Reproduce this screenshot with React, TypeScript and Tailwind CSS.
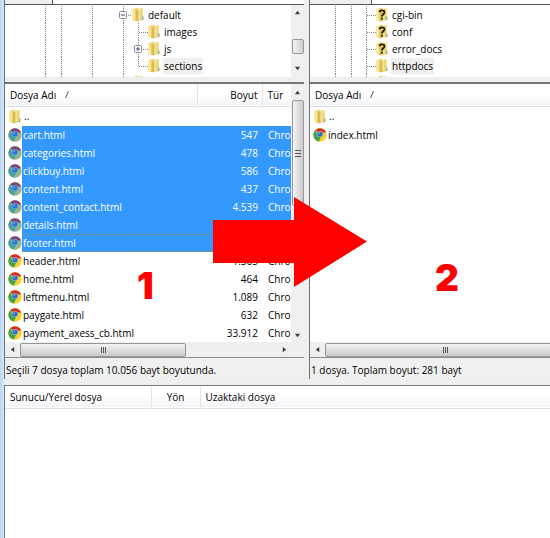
import type { ReactNode } from 'react';

type FileEntry = { name: string; size: string; selected?: boolean; focused?: boolean };

const localFiles: FileEntry[] = [
    { name: 'cart.html', size: '547', selected: true },
    { name: 'categories.html', size: '478', selected: true },
    { name: 'clickbuy.html', size: '586', selected: true },
    { name: 'content.html', size: '437', selected: true },
    { name: 'content_contact.html', size: '4.539', selected: true },
    { name: 'details.html', size: '1.906', selected: true },
    { name: 'footer.html', size: '1.563', selected: true, focused: true },
    { name: 'header.html', size: '1.565' },
    { name: 'home.html', size: '464' },
    { name: 'leftmenu.html', size: '1.089' },
    { name: 'paygate.html', size: '632' },
    { name: 'payment_axess_cb.html', size: '33.912' },
];

function FolderIcon({ unknown = false }: { unknown?: boolean }) {
    return (
        <svg viewBox="0 0 12 15" className="w-3 h-[15px] shrink-0" aria-hidden="true">
            <path d="M0.5 2.5 L5 0.5 L6.5 1 V3 L11 1.5 V13 L5 14.5 L0.5 13Z" fill="#eed67a" />
            <path d="M0.5 2.5 L3.5 3.5 V14 L0.5 13Z" fill="#f8e795" />
            <path d="M3.5 4 L6 2.5 V14 L3.5 14Z" fill="#dcbc50" />
            <path d="M7 1.5 L10 1 L11 2 V13 L7 13.8Z" fill="#f5e391" />
            <path d="M9 2 V13" stroke="#e0c25c" strokeWidth="0.8" />
            <path d="M10 9.5 h1.5 v3.5 h-1.5z" fill="#8fb3a0" />
            {unknown && (
                <path
                    d="M3.5 5.3 C3.5 2.6 8.5 2.6 8.5 5.3 C8.5 7.2 6 7.3 6 9.5 M6 10.8 V12.6"
                    fill="none"
                    stroke="#1c1803"
                    strokeWidth="1.8"
                />
            )}
        </svg>
    );
}

function ChromeIcon({ tinted = false }: { tinted?: boolean }) {
    const [red, yellow, green, blue, ring] = tinted
        ? ['#84406f', '#98b58c', '#4aa39c', '#2a72d8', '#7fb0e8']
        : ['#dc2a20', '#f8d32c', '#3fa548', '#2f6cc4', '#a9c8ec'];
    return (
        <svg viewBox="0 0 14 14" className="w-[14px] h-[14px] shrink-0" aria-hidden="true">
            <circle cx="7" cy="7" r="6.7" fill={yellow} />
            <path d="M7 7 L2.6 2 A6.7 6.7 0 0 1 13.2 4.5 L7 4.5Z" fill={red} />
            <path d="M2.6 2 A6.7 6.7 0 0 0 6 13.6 L8 8.5 L4.5 8Z" fill={green} />
            <circle cx="7" cy="6" r="3.1" fill={ring} />
            <circle cx="7" cy="6" r="2.6" fill={blue} />
            <circle cx="6.4" cy="5.2" r="0.8" fill="#8ebcf0" />
        </svg>
    );
}

type RailKind = 'pass' | 'tee' | 'end' | 'plus' | 'minus';

// one level of the dotted tree guides
function Rail({ kind, className }: { kind: RailKind; className: string }) {
    const boxed = kind === 'plus' || kind === 'minus';
    return (
        <svg className={`h-[17px] shrink-0 ${className}`} aria-hidden="true">
            <path
                d={kind === 'end' ? 'M4.5 0 V9' : 'M4.5 0 V17'}
                stroke="#85858c"
                strokeDasharray="1 1"
            />
            {kind !== 'pass' && (
                <path d="M5 9.5 H14" stroke="#85858c" strokeDasharray="1 1" />
            )}
            {boxed && (
                <>
                    <rect x="0.5" y="5.5" width="7" height="7" rx="1" fill="#fbfbfb" stroke="#8e8e8e" />
                    <path d={kind === 'plus' ? 'M2 9 H6 M4 7 V11' : 'M2 9 H6'} stroke="#3a4fa0" />
                </>
            )}
        </svg>
    );
}

function TreeRow({ rails, label, unknown, active }: { rails: ReactNode; label: string; unknown?: boolean; active?: boolean }) {
    return (
        <li className="flex h-[17px] items-center whitespace-nowrap">
            {rails}
            <FolderIcon unknown={unknown} />
            <span className={`ml-[3px] px-px leading-4 ${active ? 'bg-[#efefef]' : ''}`}>{label}</span>
        </li>
    );
}

function LocalRails({ own, child }: { own: RailKind; child?: RailKind }) {
    return (
        <>
            <Rail kind="pass" className="w-4" />
            <Rail kind="pass" className="w-[31px]" />
            <Rail kind="pass" className="w-[31px]" />
            <Rail kind={own} className={child ? 'w-[15px]' : 'w-[13px]'} />
            {child && <Rail kind={child} className="w-[14px]" />}
        </>
    );
}

function RemoteRails() {
    return (
        <>
            <Rail kind="pass" className="w-4" />
            <Rail kind="pass" className="w-[15px]" />
            <Rail kind="tee" className="w-[14px]" />
        </>
    );
}

function Arrow({ dir }: { dir: 'up' | 'down' | 'left' | 'right' }) {
    const paths = {
        up: 'M1 6 L4 2 L7 6Z',
        down: 'M1 2 L4 6 L7 2Z',
        left: 'M6 1 L2 4 L6 7Z',
        right: 'M2 1 L6 4 L2 7Z',
    };
    return (
        <button type="button" aria-label={`Scroll ${dir}`} className="flex size-[14px] shrink-0 items-center justify-center">
            <svg viewBox="0 0 8 8" className="size-[7px]">
                <path d={paths[dir]} fill="#3c3c3c" />
            </svg>
        </button>
    );
}

function HScroll({ thumb }: { thumb: string }) {
    return (
        <div className="flex h-[15px] items-center bg-[#efefef]">
            <Arrow dir="left" />
            <div className="flex min-w-0 flex-1 px-px">
                <div className={`flex h-[14px] items-center justify-center gap-px rounded-xs border border-[#979797] bg-linear-to-b from-[#f4f4f4] to-[#c9c9cb] ${thumb}`}>
                    <i className="h-[6px] w-px bg-[#555]" />
                    <i className="h-[6px] w-px bg-[#555]" />
                    <i className="h-[6px] w-px bg-[#555]" />
                </div>
            </div>
            <Arrow dir="right" />
        </div>
    );
}

function PathStrip({ width }: { width: string }) {
    return (
        <div className="flex h-[5px] border-b border-[#55555a] bg-white">
            <div className={`border-r border-[#55555a] bg-[#efefef] ${width}`} />
        </div>
    );
}

function NameHeader() {
    return (
        <th className="p-0 pl-[5px] text-left font-normal">
            <button type="button" className="flex items-center gap-[9px]">
                Dosya Adı
                <svg viewBox="0 0 4 7" className="h-[7px] w-1" aria-hidden="true">
                    <path d="M0.5 7 L3.5 0" stroke="#444" strokeWidth="0.9" />
                </svg>
            </button>
        </th>
    );
}

function ParentName() {
    return (
        <span className="flex items-center gap-[3px] pl-1">
            <FolderIcon />
            ..
        </span>
    );
}

const headRow = 'h-[22px] border-b border-[#dfdfe3] bg-linear-to-b from-white from-50% to-[#f3f4f7]';

function FileRow({ file }: { file: FileEntry }) {
    const cell = `h-[18px] whitespace-nowrap ${file.selected ? 'bg-[#3399ff] text-white' : ''} ${file.focused ? 'border-y border-dashed border-[#8c8b74] leading-4' : 'leading-[18px]'}`;
    return (
        <tr>
            <td className="p-0">
                <div className="flex items-center pl-[3px]">
                    <ChromeIcon tinted={file.selected} />
                    <span className={`min-w-0 flex-1 pl-px ${cell}`}>{file.name}</span>
                </div>
            </td>
            <td className="p-0">
                <div className={`pr-1 text-right ${cell}`}>{file.size}</div>
            </td>
            <td className="p-0">
                <div className={`pl-[6px] ${cell}`}>Chro</div>
            </td>
        </tr>
    );
}

function LocalPane() {
    return (
        <section className="flex min-w-0 flex-col border-l border-[#6f6f73]">
            <PathStrip width="w-12" />
            <div className="flex h-[72px] overflow-hidden bg-white">
                <ul className="min-w-0 flex-1 overflow-hidden pl-9 pt-px">
                    <TreeRow rails={<LocalRails own="minus" />} label="default" />
                    <TreeRow rails={<LocalRails own="pass" child="tee" />} label="images" />
                    <TreeRow rails={<LocalRails own="pass" child="plus" />} label="js" />
                    <TreeRow rails={<LocalRails own="pass" child="end" />} label="sections" active />
                    <TreeRow rails={<LocalRails own="pass" />} label="" />
                </ul>
                <div className="flex w-[13px] flex-col items-center bg-[#f0f0f0]">
                    <Arrow dir="up" />
                    <div className="mt-5 h-[15px] w-3 rounded-xs border border-[#979797] bg-linear-to-r from-[#f6f6f6] to-[#cfcfd2]" />
                    <div className="mt-[7px]">
                        <Arrow dir="down" />
                    </div>
                </div>
            </div>
            <div className="h-[5px] bg-[#efefef]" />
            <div className="flex border-t-2 border-[#77777b] bg-white">
                <div className="min-w-0 flex-1">
                    <table className="w-full table-fixed border-collapse">
                        <colgroup>
                            <col />
                            <col className="w-[65px]" />
                            <col className="w-[29px]" />
                        </colgroup>
                        <thead>
                            <tr className={headRow}>
                                <NameHeader />
                                <th className="border-l border-[#e3e4e8] p-0 pr-1 text-right font-normal">Boyut</th>
                                <th className="border-l border-[#e3e4e8] p-0 pl-[5px] text-left font-normal">Tür</th>
                            </tr>
                        </thead>
                        <tbody>
                            <tr className="h-5">
                                <td className="p-0" colSpan={3}>
                                    <ParentName />
                                </td>
                            </tr>
                            {localFiles.map((file) => (
                                <FileRow key={file.name} file={file} />
                            ))}
                        </tbody>
                    </table>
                </div>
                <div className="flex w-[13px] flex-col items-center bg-[#f0f0f0] pt-px">
                    <Arrow dir="up" />
                    <div className="mt-px flex h-[106px] w-3 flex-col items-center justify-center gap-[2px] rounded-xs border border-[#979797] bg-linear-to-r from-[#f6f6f6] to-[#c9c9cd]">
                        <i className="h-px w-[6px] bg-[#555]" />
                        <i className="h-px w-[6px] bg-[#555]" />
                        <i className="h-px w-[6px] bg-[#555]" />
                    </div>
                    <div className="mt-auto">
                        <Arrow dir="down" />
                    </div>
                </div>
            </div>
            <div className="bg-[#efefef] pr-[13px]">
                <HScroll thumb="w-[65%]" />
            </div>
            <p className="h-[22px] truncate border-t border-[#8c8c90] bg-[#f0f0f0] pl-px leading-6">
                Seçili 7 dosya toplam 10.056 bayt boyutunda.
            </p>
        </section>
    );
}

function RemotePane() {
    return (
        <section className="flex min-w-0 flex-col border-l border-[#6f6f73]">
            <PathStrip width="w-[62px]" />
            <ul className="h-[72px] overflow-hidden bg-white pl-[21px] pt-px">
                <TreeRow rails={<RemoteRails />} label="cgi-bin" unknown />
                <TreeRow rails={<RemoteRails />} label="conf" unknown />
                <TreeRow rails={<RemoteRails />} label="error_docs" unknown />
                <TreeRow rails={<RemoteRails />} label="httpdocs" active />
                <TreeRow rails={<RemoteRails />} label="" />
            </ul>
            <div className="h-[5px] bg-[#efefef]" />
            <div className="flex-1 border-t-2 border-[#77777b] bg-white">
                <table className="w-full border-collapse">
                    <thead>
                        <tr className={headRow}>
                            <NameHeader />
                        </tr>
                    </thead>
                    <tbody>
                        <tr className="h-5">
                            <td className="p-0">
                                <ParentName />
                            </td>
                        </tr>
                        <tr className="h-[18px]">
                            <td className="p-0">
                                <span className="flex items-center gap-px pl-[3px]">
                                    <ChromeIcon />
                                    index.html
                                </span>
                            </td>
                        </tr>
                    </tbody>
                </table>
            </div>
            <div className="overflow-hidden">
                <div className="-mr-5">
                    <HScroll thumb="w-[240px] shrink-0" />
                </div>
            </div>
            <p className="h-[22px] truncate border-t border-[#8c8c90] bg-[#f0f0f0] pl-px leading-6">
                1 dosya. Toplam boyut: 281 bayt
            </p>
        </section>
    );
}

export default function App() {
    return (
        <main className="relative flex min-h-screen overflow-hidden bg-[#efefef] font-['Open_Sans',sans-serif] text-[10px] leading-4 text-black">
            <div className="w-1 shrink-0 bg-linear-to-r from-[#b9d7f4] to-[#d4e6f8]" />
            <div className="flex min-w-0 flex-1 flex-col">
                <div className="grid grid-cols-[300fr_241fr] gap-[5px]">
                    <LocalPane />
                    <RemotePane />
                </div>
                <section className="mt-[6px] flex-1 border-l border-t border-[#77777b] bg-white">
                    <table className="w-full table-fixed border-collapse">
                        <thead>
                            <tr className={headRow}>
                                <th className="w-[146px] p-0 pl-[5px] text-left font-normal">Sunucu/Yerel dosya</th>
                                <th className="w-[49px] border-l border-[#e3e4e8] p-0 text-center font-normal">Yön</th>
                                <th className="border-l border-[#e3e4e8] p-0 pl-[5px] text-left font-normal">Uzaktaki dosya</th>
                            </tr>
                        </thead>
                    </table>
                </section>
            </div>
            <svg viewBox="0 0 154 90" className="absolute left-[213px] top-[197px] h-[90px] w-[154px]" aria-hidden="true">
                <path d="M0 23 H81 V0 L154 44.5 L81 90 V66 H0Z" fill="#ff0000" />
            </svg>
            <span className="absolute left-[137px] top-[266px] font-['Inter',sans-serif] text-[37px] font-black leading-10 text-[#ff0000]">1</span>
            <span className="absolute left-[435px] top-[258px] font-['Inter',sans-serif] text-[37px] font-black leading-10 text-[#ff0000]">2</span>
        </main>
    );
}
